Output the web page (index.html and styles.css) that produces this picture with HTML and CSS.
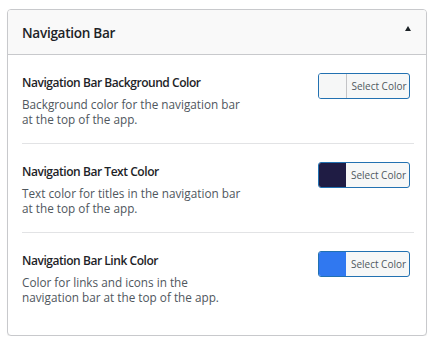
FILE: index.html
```html
<!DOCTYPE html>
<html>
<head>
<meta charset="utf-8">
<link rel="stylesheet" href="styles.css">
</head>
<body>
<div class="card">
  <div class="card-header">
    <h2 class="card-title">Navigation Bar</h2>
    <span class="toggle"></span>
  </div>
  <div class="card-body">
    <div class="row">
      <div class="info">
        <div class="label">Navigation Bar Background Color</div>
        <div class="desc">Background color for the navigation bar<br>at the top of the app.</div>
      </div>
      <button class="picker"><span class="swatch swatch-light"></span><span class="picker-text">Select Color</span></button>
    </div>
    <div class="row">
      <div class="info">
        <div class="label">Navigation Bar Text Color</div>
        <div class="desc">Text color for titles in the navigation bar<br>at the top of the app.</div>
      </div>
      <button class="picker"><span class="swatch swatch-dark"></span><span class="picker-text">Select Color</span></button>
    </div>
    <div class="row">
      <div class="info">
        <div class="label">Navigation Bar Link Color</div>
        <div class="desc">Color for links and icons in the<br>navigation bar at the top of the app.</div>
      </div>
      <button class="picker"><span class="swatch swatch-blue"></span><span class="picker-text">Select Color</span></button>
    </div>
  </div>
</div>
</body>
</html>
```
FILE: styles.css
```css
html, body {
  margin: 0;
  background: #ffffff;
}
body {
  padding: 9px 11px 0 7px;
  font-family: "Open Sans", "Noto Sans", sans-serif;
  color: #1d2327;
}
.card {
  border: 1px solid #c8c9cc;
  border-radius: 4px;
  box-shadow: 0 1px 1px rgba(0,0,0,0.06);
  background: #fff;
  overflow: hidden;
}
.card-header {
  display: flex;
  align-items: center;
  justify-content: space-between;
  height: 44px;
  padding: 0 14px;
  background: #f9f9f9;
  border-bottom: 1px solid #c8c9cc;
}
.card-title {
  margin: 0;
  font-size: 13.6px;
  font-weight: 600;
  letter-spacing: -0.3px;
  color: #1d2327;
}
.toggle {
  width: 0;
  height: 0;
  border-left: 3.5px solid transparent;
  border-right: 3.5px solid transparent;
  border-bottom: 5px solid #1d2327;
  margin-right: 1px;
  margin-top: -8px;
}
.card-body {
  padding: 0 12px 14px 14px;
}
.row {
  display: flex;
  justify-content: space-between;
  align-items: flex-start;
  padding: 19px 4px 16px 0;
  border-bottom: 1px solid #e2e3e5;
}
.row:last-child {
  border-bottom: none;
}
.label {
  font-size: 12px;
  font-weight: 600;
  letter-spacing: -0.45px;
  line-height: 18px;
  color: #1d2327;
}
.desc {
  margin-top: 5px;
  font-size: 11.75px;
  line-height: 15px;
  color: #50575e;
}
.picker {
  display: flex;
  align-items: stretch;
  width: 92px;
  height: 26px;
  margin-top: -1px;
  padding: 0;
  border: 1px solid #2271b1;
  border-radius: 3px;
  background: #f6f7f7;
  overflow: hidden;
  font-family: inherit;
  cursor: pointer;
}
.swatch {
  width: 27px;
  flex: none;
}
.swatch-light {
  background: #f6f7f7;
  border-right: 1px solid #c3c4c7;
}
.swatch-dark {
  background: #1f1c44;
}
.swatch-blue {
  background: #3078f0;
}
.picker-text {
  flex: 1;
  display: flex;
  align-items: center;
  justify-content: center;
  padding-left: 2px;
  font-size: 10px;
  color: #50575e;
}
```
